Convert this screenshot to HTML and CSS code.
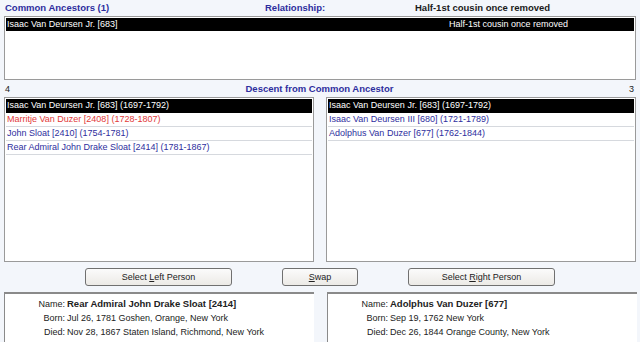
FILE: index.html
```html
<!DOCTYPE html>
<html>
<head>
<meta charset="utf-8">
<link rel="stylesheet" href="styles.css">
</head>
<body>
<div class="hdr">
  <span class="title">Common Ancestors (1)</span>
  <span class="title rel-label">Relationship:</span>
  <span class="rel-value">Half-1st cousin once removed</span>
</div>
<div class="toplist">
  <div class="toprow sel">
    <span class="tname">Isaac Van Deursen Jr. [683]</span>
    <span class="trel">Half-1st cousin once removed</span>
  </div>
</div>
<div class="midbar">
  <span class="count">4</span>
  <span class="title mid">Descent from Common Ancestor</span>
  <span class="count">3</span>
</div>
<div class="lists">
  <div class="list">
    <div class="row sel">Isaac Van Deursen Jr. [683] (1697-1792)</div>
    <div class="row red">Marritje Van Duzer [2408] (1728-1807)</div>
    <div class="row blue">John Sloat [2410] (1754-1781)</div>
    <div class="row blue">Rear Admiral John Drake Sloat [2414] (1781-1867)</div>
  </div>
  <div class="list">
    <div class="row sel">Isaac Van Deursen Jr. [683] (1697-1792)</div>
    <div class="row blue">Isaac Van Deursen III [680] (1721-1789)</div>
    <div class="row blue">Adolphus Van Duzer [677] (1762-1844)</div>
  </div>
</div>
<div class="buttons">
  <button class="btn wide">Select <u>L</u>eft Person</button>
  <button class="btn narrow"><u>S</u>wap</button>
  <button class="btn wide">Select <u>R</u>ight Person</button>
</div>
<div class="details">
  <div class="panel">
    <span class="lbl">Name:</span><span class="val b">Rear Admiral John Drake Sloat [2414]</span>
    <span class="lbl">Born:</span><span class="val">Jul 26, 1781 Goshen, Orange, New York</span>
    <span class="lbl">Died:</span><span class="val">Nov 28, 1867 Staten Island, Richmond, New York</span>
  </div>
  <div class="panel">
    <span class="lbl">Name:</span><span class="val b">Adolphus Van Duzer [677]</span>
    <span class="lbl">Born:</span><span class="val">Sep 19, 1762 New York</span>
    <span class="lbl">Died:</span><span class="val">Dec 26, 1844 Orange County, New York</span>
  </div>
</div>
</body>
</html>
```
FILE: styles.css
```css
html, body {
  margin: 0;
  padding: 0;
  background: #f3f6fb;
  font-family: "Liberation Sans", Arial, sans-serif;
  font-size: 9px;
  color: #222;
  overflow: hidden;
}
.title {
  color: #2e2e9e;
  font-weight: bold;
  font-size: 9.5px;
}
.hdr {
  height: 16px;
  display: grid;
  grid-template-columns: 260px 150px 1fr;
  align-items: center;
  padding-left: 5px;
  line-height: 14px;
}
.rel-value {
  font-weight: bold;
  font-size: 9.5px;
  color: #1a1a1a;
}
.toplist {
  margin: 0 4px;
  height: 60px;
  background: #fff;
  border: 1px solid #9a9a9a;
  padding: 1px;
}
.toprow {
  display: flex;
  height: 13px;
  line-height: 13px;
  padding-left: 1px;
}
.tname { flex: 1; }
.trel { padding-right: 66px; }
.sel {
  background: #000;
  color: #fff;
}
.midbar {
  height: 17px;
  display: flex;
  align-items: center;
  justify-content: space-between;
  padding: 0 6px 0 5px;
}
.lists {
  display: flex;
  gap: 12px;
  margin: 0 4px;
}
.list {
  flex: 1;
  height: 161px;
  background: #fff;
  border: 1px solid #9a9a9a;
  padding: 1px;
}
.row {
  height: 13px;
  line-height: 13px;
  padding-left: 1px;
  border-bottom: 1px solid #d6d9de;
}
.row.sel { border-bottom-color: #000; }
.red { color: #e23a3a; }
.blue { color: #2e2e9e; }
.buttons {
  height: 30px;
  display: flex;
  align-items: center;
  justify-content: center;
  gap: 50px;
}
.btn {
  height: 18px;
  padding: 0;
  font: 9px "Liberation Sans", Arial, sans-serif;
  color: #222;
  background: linear-gradient(#fbfbfb, #eceae6);
  border: 1px solid #707070;
  border-radius: 3px;
}
.btn.wide { width: 147px; }
.btn.narrow { width: 76px; }
.details {
  display: flex;
  gap: 13px;
  margin: 0 3px 0 4px;
}
.panel {
  flex: 1;
  height: 60px;
  background: #fff;
  border-top: 2px solid #8a8a8a;
  border-left: 1px solid #8a8a8a;
  display: grid;
  grid-template-columns: 62px 1fr;
  grid-auto-rows: 14px;
  align-content: start;
  padding-top: 3px;
  line-height: 14px;
}
.lbl {
  text-align: right;
  padding-right: 2px;
  color: #222;
}
.val { white-space: nowrap; }
.b { font-weight: bold; font-size: 9.5px; }
```
